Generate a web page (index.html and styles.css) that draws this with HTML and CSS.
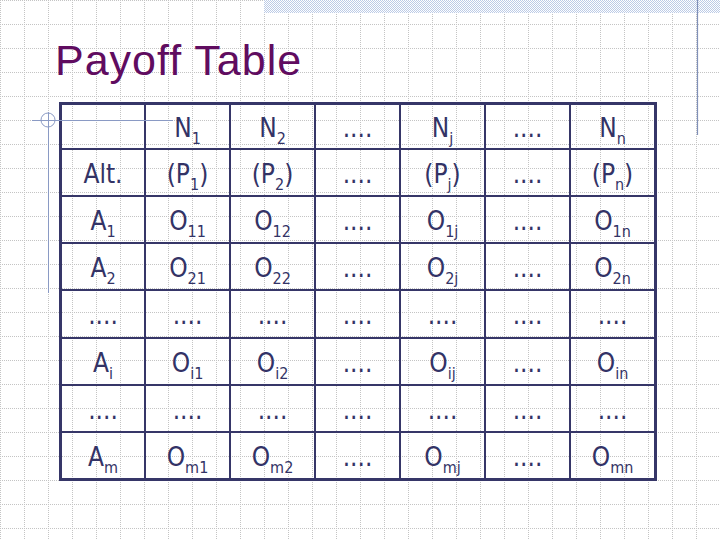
FILE: index.html
```html
<!DOCTYPE html>
<html>
<head>
<meta charset="utf-8">
<link rel="stylesheet" href="styles.css">
</head>
<body>
<div class="slide">
  <svg class="bg" width="720" height="540" viewBox="0 0 720 540">
    <defs>
      <pattern id="grid" width="24" height="24" patternUnits="userSpaceOnUse">
        <path d="M0.5 0V24" stroke="#c4c4c4" stroke-width="1" stroke-dasharray="1 1"/>
        <path d="M0 0.5H24" stroke="#c4c4c4" stroke-width="1" stroke-dasharray="1 1"/>
      </pattern>
      <pattern id="hatch" width="2" height="2" patternUnits="userSpaceOnUse">
        <rect x="0" y="0" width="1" height="1" fill="#bccbe6"/>
        <rect x="1" y="1" width="1" height="1" fill="#bccbe6"/>
      </pattern>
    </defs>
    <rect x="0" y="0" width="720" height="540" fill="url(#grid)"/>
    <rect x="264" y="0" width="456" height="13" fill="#fff"/>
    <rect x="264" y="0" width="456" height="13" fill="url(#hatch)"/>
  </svg>

  <h1 class="title">Payoff Table</h1>

  <div class="table">
    <div class="cell"><span></span></div>
    <div class="cell"><span>N<sub>1</sub></span></div>
    <div class="cell"><span>N<sub>2</sub></span></div>
    <div class="cell"><span>....</span></div>
    <div class="cell"><span>N<sub>j</sub></span></div>
    <div class="cell"><span>....</span></div>
    <div class="cell"><span>N<sub>n</sub></span></div>

    <div class="cell"><span>Alt.</span></div>
    <div class="cell"><span>(P<sub>1</sub>)</span></div>
    <div class="cell"><span>(P<sub>2</sub>)</span></div>
    <div class="cell"><span>....</span></div>
    <div class="cell"><span>(P<sub>j</sub>)</span></div>
    <div class="cell"><span>....</span></div>
    <div class="cell"><span>(P<sub>n</sub>)</span></div>

    <div class="cell"><span>A<sub>1</sub></span></div>
    <div class="cell"><span>O<sub>11</sub></span></div>
    <div class="cell"><span>O<sub>12</sub></span></div>
    <div class="cell"><span>....</span></div>
    <div class="cell"><span>O<sub>1j</sub></span></div>
    <div class="cell"><span>....</span></div>
    <div class="cell"><span>O<sub>1n</sub></span></div>

    <div class="cell"><span>A<sub>2</sub></span></div>
    <div class="cell"><span>O<sub>21</sub></span></div>
    <div class="cell"><span>O<sub>22</sub></span></div>
    <div class="cell"><span>....</span></div>
    <div class="cell"><span>O<sub>2j</sub></span></div>
    <div class="cell"><span>....</span></div>
    <div class="cell"><span>O<sub>2n</sub></span></div>

    <div class="cell"><span>....</span></div>
    <div class="cell"><span>....</span></div>
    <div class="cell"><span>....</span></div>
    <div class="cell"><span>....</span></div>
    <div class="cell"><span>....</span></div>
    <div class="cell"><span>....</span></div>
    <div class="cell"><span>....</span></div>

    <div class="cell"><span>A<sub>i</sub></span></div>
    <div class="cell"><span>O<sub>i1</sub></span></div>
    <div class="cell"><span>O<sub>i2</sub></span></div>
    <div class="cell"><span>....</span></div>
    <div class="cell"><span>O<sub>ij</sub></span></div>
    <div class="cell"><span>....</span></div>
    <div class="cell"><span>O<sub>in</sub></span></div>

    <div class="cell"><span>....</span></div>
    <div class="cell"><span>....</span></div>
    <div class="cell"><span>....</span></div>
    <div class="cell"><span>....</span></div>
    <div class="cell"><span>....</span></div>
    <div class="cell"><span>....</span></div>
    <div class="cell"><span>....</span></div>

    <div class="cell"><span>A<sub>m</sub></span></div>
    <div class="cell"><span>O<sub>m1</sub></span></div>
    <div class="cell"><span>O<sub>m2</sub></span></div>
    <div class="cell"><span>....</span></div>
    <div class="cell"><span>O<sub>mj</sub></span></div>
    <div class="cell"><span>....</span></div>
    <div class="cell"><span>O<sub>mn</sub></span></div>
  </div>

  <svg class="deco" width="720" height="540" viewBox="0 0 720 540">
    <path d="M32 120.5H173" stroke="#8a9ac4" stroke-width="1" fill="none"/>
    <path d="M48.5 112V293" stroke="#8a9ac4" stroke-width="1" fill="none"/>
    <circle cx="48" cy="120" r="7" stroke="#8a9ac4" stroke-width="1" fill="none"/>
    <path d="M697.5 0V135" stroke="#8090b8" stroke-width="1.2" fill="none"/>
  </svg>
</div>
</body>
</html>
```

FILE: styles.css
```css
html, body {
  margin: 0;
  padding: 0;
  background: #ffffff;
}

.slide {
  position: relative;
  width: 720px;
  height: 540px;
  overflow: hidden;
  padding-top: 39px;
  box-sizing: border-box;
}

.bg {
  position: absolute;
  left: 0;
  top: 0;
  z-index: 0;
}

.deco {
  position: absolute;
  left: 0;
  top: 0;
  z-index: 2;
  pointer-events: none;
}

.title {
  position: relative;
  z-index: 1;
  margin: 0 0 0 55px;
  font-family: "Liberation Sans", Arial, sans-serif;
  font-weight: normal;
  font-size: 43px;
  line-height: 43px;
  height: 43px;
  color: #600c60;
  letter-spacing: 1px;
}

.table {
  position: relative;
  z-index: 1;
  margin: 20px 0 0 59px;
  width: 598px;
  height: 379px;
  box-sizing: border-box;
  border: 3px solid #363668;
  display: grid;
  grid-template-columns: 82px repeat(6, 85px);
  grid-template-rows: 43px repeat(7, 1fr);
  font-family: "DejaVu Sans Condensed", "DejaVu Sans", Verdana, sans-serif;
  font-stretch: condensed;
  font-size: 26px;
  color: #333366;
}

.cell {
  display: flex;
  align-items: center;
  justify-content: center;
  border-left: 2px solid #363668;
  border-top: 2px solid #363668;
  white-space: nowrap;
}

.cell > span {
  display: block;
  line-height: 26px;
  margin-top: 3px;
}

.cell:nth-child(7n+1) {
  border-left: none;
}

.cell:nth-child(-n+7) {
  border-top: none;
}

sub {
  font-size: 16px;
  vertical-align: -7px;
  line-height: 0;
}
```
